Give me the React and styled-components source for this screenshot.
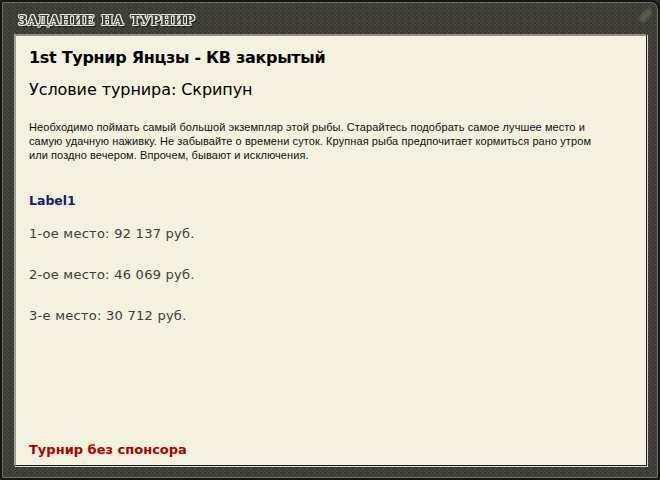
import React from 'react'
import styled, { createGlobalStyle } from 'styled-components'

const GlobalStyle = createGlobalStyle`
  html, body {
    margin: 0;
    padding: 0;
    background: #2a2a26;
  }
`

const Frame = styled.div`
  position: relative;
  box-sizing: border-box;
  width: 660px;
  height: 480px;
  padding: 0 11px 12px 12px;
  display: flex;
  flex-direction: column;
  border: 2px solid #141412;
  border-radius: 3px 9px 3px 3px;
  box-shadow: inset 0 0 0 1px #6f6f66;
  background-color: #42413a;
  background-image:
    radial-gradient(circle at 1px 1px, rgba(0, 0, 0, 0.16) 1px, transparent 1.5px),
    repeating-conic-gradient(#46453e 0 25%, #3b3a33 0 50%);
  background-size: 7px 5px, 4px 4px;
`

const Heading = styled.h1`
  margin: 0;
  height: 32px;
  line-height: 37px;
  margin-left: 4px;
  font-family: "DejaVu Serif", serif;
  font-size: 12.5px;
  font-weight: 700;
  letter-spacing: 0.4px;
  word-spacing: 2px;
  white-space: nowrap;
  color: #3f3f39;
  will-change: transform;
  text-shadow:
    1px 0 0 #f0f0ea, -1px 0 0 #f0f0ea, 0 1px 0 #f0f0ea, 0 -1px 0 #f0f0ea,
    1px 1px 0 #c9c9c2, -1px -1px 0 #c9c9c2, 1px -1px 0 #c9c9c2, -1px 1px 0 #c9c9c2,
    2px 2px 0 #1a1a17;
`

const Rivet = styled.div`
  position: absolute;
  top: 6px;
  right: 9px;
  width: 7px;
  height: 15px;
  border-radius: 4px;
  background: #5c5d4e;
  filter: blur(1px);
  transform: rotate(40deg);
`

const Panel = styled.main`
  flex: 1;
  box-sizing: border-box;
  padding: 12px 14px 0 13px;
  display: flex;
  flex-direction: column;
  background: #f4f2df;
  border: 1px solid #1f1f1b;
  border-top: 2px solid #8f8f82;
  border-left: 2px solid #a3a396;
  box-shadow: 1px 1px 0 #d8d8cc;
  color: #000;
`

const Title = styled.div`
  font-family: "DejaVu Sans", Verdana, sans-serif;
  font-size: 16px;
  font-weight: 700;
  line-height: 20px;
  letter-spacing: -0.3px;
`

const Condition = styled.div`
  margin-top: 12px;
  font-family: "DejaVu Sans", Verdana, sans-serif;
  font-size: 16px;
  line-height: 20px;
  letter-spacing: -0.08px;
`

const Description = styled.p`
  margin: 20px 0 0;
  width: 570px;
  font-family: "Liberation Sans", Arial, sans-serif;
  font-size: 11px;
  line-height: 14px;
  letter-spacing: 0.08px;
  color: #111;
`

const Sponsor = styled.div`
  margin-top: 31px;
  font-family: "DejaVu Sans", Verdana, sans-serif;
  font-size: 12.5px;
  font-weight: 700;
  line-height: 16px;
  color: #1c1a6b;
`

const Prizes = styled.div`
  margin-top: 17px;
  display: flex;
  flex-direction: column;
  gap: 25px;
`

const Prize = styled.div`
  font-family: "DejaVu Sans", Verdana, sans-serif;
  font-size: 13px;
  line-height: 16px;
  letter-spacing: 0.26px;
  color: #3d3d3a;
`

const Footer = styled.div`
  margin-top: auto;
  margin-bottom: 7px;
  font-family: "DejaVu Sans", Verdana, sans-serif;
  font-size: 13px;
  font-weight: 700;
  line-height: 16px;
  color: #b00000;
`

const prizes = ['1-ое место: 92 137 руб.', '2-ое место: 46 069 руб.', '3-е место: 30 712 руб.']

export default function App() {
  return (
    <Frame>
      <GlobalStyle />
      <Heading>ЗАДАНИЕ НА ТУРНИР</Heading>
      <Rivet />
      <Panel>
        <Title>1st Турнир Янцзы - КВ закрытый</Title>
        <Condition>Условие турнира: Скрипун</Condition>
        <Description>
          Необходимо поймать самый большой экземпляр этой рыбы. Старайтесь подобрать самое лучшее место и
          самую удачную наживку. Не забывайте о времени суток. Крупная рыба предпочитает кормиться рано утром
          или поздно вечером. Впрочем, бывают и исключения.
        </Description>
        <Sponsor>Label1</Sponsor>
        <Prizes>
          {prizes.map(p => <Prize key={p}>{p}</Prize>)}
        </Prizes>
        <Footer>Турнир без спонсора</Footer>
      </Panel>
    </Frame>
  )
}
